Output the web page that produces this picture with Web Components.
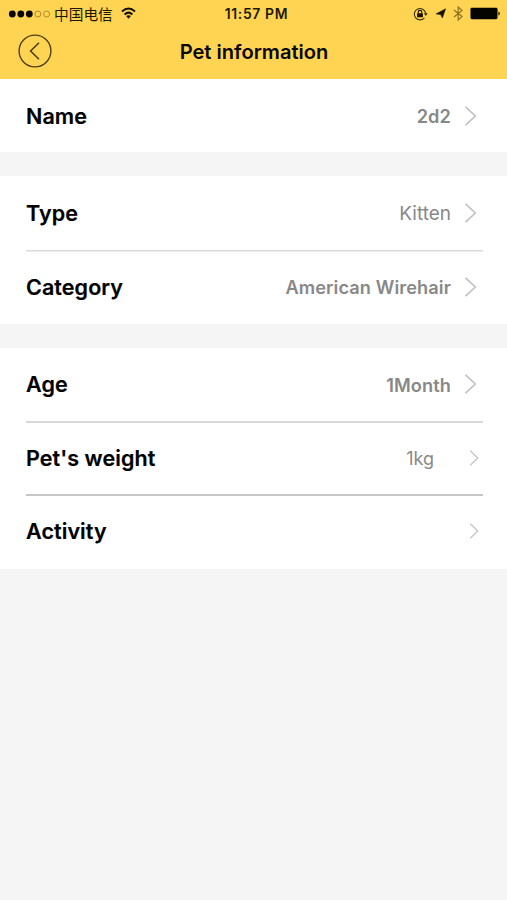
<!DOCTYPE html>
<html lang="en">
<head>
<meta charset="utf-8">
<title>Pet information</title>
<style>
html,body{margin:0;height:100%;background:#f5f5f5;font-family:Inter,"Noto Sans CJK SC",sans-serif;color:#080808}
body{overflow:hidden}
</style>
</head>
<body>
<pet-screen></pet-screen>
<script>
function define(name, html, setup) {
  customElements.define(name, class extends HTMLElement {
    constructor() {
      super();
      this.attachShadow({ mode: "open" }).innerHTML = html;
    }
    connectedCallback() { if (setup) setup(this, this.shadowRoot); }
  });
}

define("status-bar", `
<style>
:host{display:grid;grid-template-columns:1fr auto 1fr;align-items:center;height:27px;padding:0 6px 0 8px;color:#1d1803}
.left,.right{display:flex;align-items:center}
.right{justify-content:flex-end}
svg{display:block;flex:none}
.carrier{font:400 14.7px/20px "Noto Sans CJK SC",sans-serif;margin:0 8px 0 3px}
.time{font-size:13.9px;font-weight:600;line-height:20px;letter-spacing:.65px;padding-left:4px}
</style>
<div class="left">
<svg width="43" height="10" viewBox="0 0 43 10"><g fill="#080600"><circle cx="4.3" cy="5" r="3.4"/><circle cx="12.8" cy="5" r="3.4"/><circle cx="21.3" cy="5" r="3.4"/></g><g fill="none" stroke="#a48424" stroke-width=".9"><circle cx="29.9" cy="5" r="3"/><circle cx="38.6" cy="5" r="3"/></g></svg>
<span class="carrier">中国电信</span>
<svg style="margin-top:-1px" width="15" height="12" viewBox="0 0 16 12" preserveAspectRatio="none"><g fill="none" stroke="#151100" stroke-width="2"><path d="M1 4.6Q8-1.7 15 4.6"/><path d="M3.8 7.5Q8 3.8 12.2 7.5"/></g><path d="M5.5 9.1Q8 7.2 10.5 9.1L8 11.7Z" fill="#151100"/></svg>
</div>
<span class="time">11:57 PM</span>
<div class="right">
<svg width="15" height="14" viewBox="0 0 15 14"><path d="M11.4 10.8A5.7 5.7 0 1 1 12.6 6.2" fill="none" stroke="#3a300b" stroke-width="1.1"/><path d="M10.8 6.2H14.8L12.8 9Z" fill="#3a300b"/><rect x="4.1" y="6.3" width="5.8" height="4" rx=".4" fill="#151100"/><path d="M5.2 6.5V5.2a1.8 1.8 0 0 1 3.6 0v1.3" fill="none" stroke="#151100" stroke-width="1.1"/></svg>
<svg style="margin-left:7px" width="12" height="11" viewBox="0 0 12 11"><path d="M10.6 .8L7.4 10L5.6 6.5L1 5.9Z" fill="#151100" stroke="#151100" stroke-width=".5"/></svg>
<svg style="margin-left:6px" width="11" height="15" viewBox="0 0 11 15"><path d="M1 4L9 10.6L5.2 14V1L9 4.4L1 11" fill="none" stroke="#8c7122" stroke-width="1.2"/></svg>
<svg style="margin-left:6px" width="31" height="13" viewBox="0 0 31 13"><rect x=".5" y=".8" width="27" height="11.4" rx="1.4" fill="#050400"/><path d="M28.3 4.4q1.6.3 1.6 2.1t-1.6 2.1Z" fill="#302709"/></svg>
</div>`);

define("nav-bar", `
<style>
:host{display:grid;grid-template-columns:1fr auto 1fr;align-items:center;height:52px;padding:0 18px}
svg{display:block;margin-top:-4px}
h1{margin:-2px 0 0;font-size:20.1px;line-height:28px;font-weight:600;padding-left:1px}
</style>
<svg width="34" height="34" viewBox="0 0 34 34" fill="none" stroke="#4d400f" stroke-width="1.4"><circle cx="17" cy="17" r="15.9"/><path d="M21 8.8L12.6 17L21 25.2" stroke-width="1.6"/></svg>
<h1><slot></slot></h1>`);

define("chevron-icon", `
<style>
:host{display:block;flex:none;width:13px;height:20px}
:host([small]){width:10px;height:16px}
svg{display:block;width:100%;height:100%}
path{fill:none;stroke:#c0c0c0;stroke-width:1.6}
</style>
<svg viewBox="0 0 13 20" preserveAspectRatio="none"><path d="M1.5 .8L11.3 10L1.5 19.2"/></svg>`);

define("info-row", `
<style>
:host{display:flex;align-items:center;height:var(--row-height,74px);padding:0 30px var(--drop,0px) 26px;box-sizing:border-box}
.label{flex:1;font-size:21.5px;font-weight:600;line-height:30px;color:#000;letter-spacing:.08px;-webkit-text-stroke:.2px #000}
.value{font-size:19px;line-height:26px;color:#888;font-weight:400;padding-top:1px;margin-right:13px}
:host([strong]) .value{font-weight:600;font-size:18.2px;letter-spacing:.1px}
:host([small]) .value{margin-right:35px;font-size:18px;padding-top:2px}
:host([small]){padding-right:28px}
</style>
<span class="label"></span><span class="value"><slot></slot></span><chevron-icon></chevron-icon>`,
(el, root) => {
  root.querySelector(".label").textContent = el.getAttribute("label");
  root.querySelector("chevron-icon").toggleAttribute("small", el.hasAttribute("small"));
});

define("info-group", `
<style>
:host{display:block;background:#fff;margin-bottom:24px}
::slotted(info-row:not(:first-child)){background:linear-gradient(var(--rule,#d8d8d8),var(--rule,#d8d8d8)) 26px 0/457px var(--rule-size,2px) no-repeat}
</style>
<slot></slot>`);

define("pet-screen", `
<style>
:host{display:block;width:507px;height:900px;background:#f5f5f5}
header{background:#ffd452;height:79px}
</style>
<header><status-bar></status-bar><nav-bar>Pet information</nav-bar></header>
<info-group style="--row-height:73px"><info-row label="Name" strong>2d2</info-row></info-group>
<info-group><info-row label="Type">Kitten</info-row><info-row label="Category" strong style="--drop:1px;--rule:#dadada;--rule-size:1.5px">American Wirehair</info-row></info-group>
<info-group><info-row label="Age" strong style="--row-height:73px;--drop:1px">1Month</info-row><info-row label="Pet's weight" small style="--row-height:73px">1kg</info-row><info-row label="Activity" small style="--rule:#c6c6c6;--row-height:75px;--drop:2px"></info-row></info-group>`);
</script>
</body>
</html>
